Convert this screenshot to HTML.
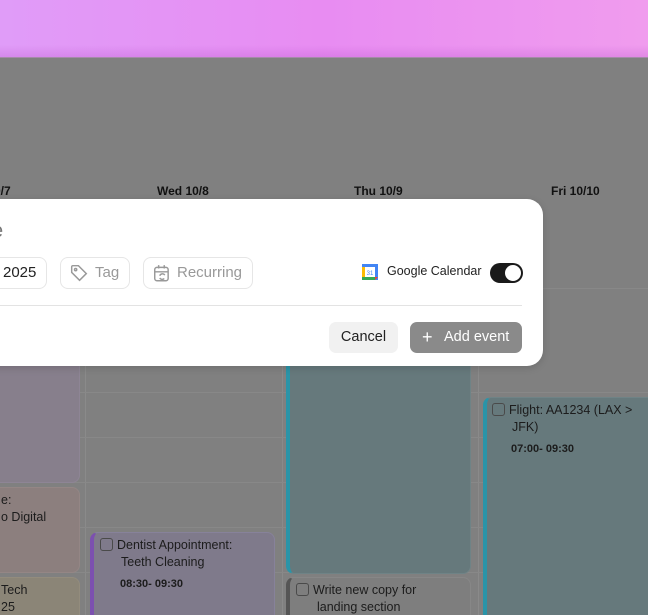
<!DOCTYPE html>
<html style="overflow:hidden;width:648px;height:615px"><head><style>
*{box-sizing:border-box;margin:0;padding:0}
body{width:648px;height:615px;overflow:hidden;position:relative;font-family:"Liberation Sans",sans-serif;background:#808080}
.top{position:absolute;left:0;top:0;width:648px;height:57px;background:linear-gradient(90deg,#e09cf8,#e88cf2 50%,#f09cee);}
.top:after{content:"";position:absolute;left:0;right:0;bottom:0;height:12px;background:linear-gradient(rgba(180,80,200,0),rgba(180,80,200,.25))}
.line{position:absolute;left:0;top:57px;width:648px;height:1px;background:#a58aa8}
.vl{position:absolute;top:290px;width:1px;height:325px;background:#8a8a8a}
.hl{position:absolute;height:1px;background:#888;left:0;width:648px}
.hd{position:absolute;top:184px;font-size:12px;font-weight:bold;color:#111}
.ev{position:absolute;border-radius:8px;font-size:12.5px;color:#1c1c1c}
.cb{display:inline-block;width:13px;height:13px;border:1.5px solid #4a4a4a;border-radius:3px;vertical-align:-2px;margin-right:4px}
.modal{position:absolute;left:-40px;top:199px;width:583px;height:167px;background:#fff;border-radius:16px;box-shadow:0 2px 8px rgba(0,0,0,.15)}
.chip{position:absolute;top:257px;height:32px;border:1px solid #e6e6e6;border-radius:8px;font-size:15px;color:#999;line-height:30px}
</style></head><body>
<div class="top"></div><div class="line"></div>
<div class="hd" style="left:-6px">0/7</div>
<div class="hd" style="left:157px">Wed 10/8</div>
<div class="hd" style="left:354px">Thu 10/9</div>
<div class="hd" style="left:551px">Fri 10/10</div>
<div class="vl" style="left:85px"></div><div class="vl" style="left:282px"></div><div class="vl" style="left:478px"></div>
<div class="hl" style="top:288px"></div>
<div class="hl" style="top:392px"></div><div class="hl" style="top:437px"></div><div class="hl" style="top:482px"></div><div class="hl" style="top:527px"></div><div class="hl" style="top:572px"></div>
<div class="ev" style="left:-10px;top:340px;width:90px;height:143px;background:#877f8c;border:1px solid #8e8595"></div>
<div class="ev" style="left:-10px;top:487px;width:90px;height:86px;background:#8c7f7e;border:1px solid #948685;padding:4px 0 0 10px;line-height:17px">e:<br>o Digital</div>
<div class="ev" style="left:-10px;top:577px;width:90px;height:50px;background:#8b8577;border:1px solid #938c7d;padding:4px 0 0 10px;line-height:17px">Tech<br>25</div>
<div class="ev" style="left:90px;top:532px;width:185px;height:90px;background:#7f7a8b;border:1px solid #87829a;border-left:4px solid #7c50b0;padding:4px 0 0 6px;line-height:17px"><span class="cb"></span>Dentist Appointment:<br><span style="margin-left:21px">Teeth Cleaning</span><div style="font-size:11px;font-weight:bold;margin-top:5px;margin-left:20px">08:30- 09:30</div></div>
<div class="ev" style="left:286px;top:340px;width:185px;height:234px;background:#66797c;border:1px solid #6f8386;border-left:4px solid #2a94a8"></div>
<div class="ev" style="left:286px;top:577px;width:185px;height:50px;background:#7e7e7e;border:1px solid #878787;border-left:4px solid #555;padding:4px 0 0 6px;line-height:17px"><span class="cb"></span>Write new copy for<br><span style="margin-left:21px">landing section</span></div>
<div class="ev" style="left:483px;top:397px;width:175px;height:230px;background:#66797c;border:1px solid #6f8386;border-left:4px solid #2a94a8;padding:4px 0 0 5px;line-height:17px"><span class="cb"></span>Flight: AA1234 (LAX &gt;<br><span style="margin-left:20px">JFK)</span><div style="font-size:11px;font-weight:bold;margin-top:5px;margin-left:19px">07:00- 09:30</div></div>
<div class="modal"></div>
<div style="position:absolute;left:-8px;top:220px;font-size:20px;color:#777">e</div>
<div class="chip" style="left:-20px;width:67px;color:#222;padding-left:22px">2025</div>
<div class="chip" style="left:60px;width:70px;padding-left:34px"><svg style="position:absolute;left:9px;top:6px" width="18" height="18" viewBox="0 0 16 16" fill="none" stroke="#999" stroke-width="1.3"><path d="M1.5 2.5v5l7 7 6-6-7-7h-5a1 1 0 0 0-1 1z"/><circle cx="5" cy="5" r="1"/></svg>Tag</div>
<div class="chip" style="left:143px;width:110px;padding-left:33px"><svg style="position:absolute;left:9px;top:6px" width="18" height="19" viewBox="0 0 16 17" fill="none" stroke="#999" stroke-width="1.3"><rect x="1.5" y="3" width="12" height="12" rx="2"/><path d="M5 1v3M10 1v3M1.5 7h12M6 10.5a2.5 2.5 0 0 1 4.5-.5M10 13a2.5 2.5 0 0 1-4-.5"/></svg>Recurring</div>
<svg style="position:absolute;left:362px;top:264px" width="16" height="16" viewBox="0 0 16 16"><rect x="0" y="0" width="16" height="16" fill="#4285f4"/><rect x="3" y="3" width="10" height="10" fill="#fff"/><rect x="0" y="13" width="13" height="3" fill="#34a853"/><rect x="0" y="3" width="3" height="10" fill="#fbbc04"/><path d="M13 13h3l-3 3z" fill="#ea4335"/><text x="8" y="11" font-size="6" text-anchor="middle" fill="#4285f4" font-family="Liberation Sans">31</text></svg>
<div style="position:absolute;left:387px;top:264px;font-size:12.5px;color:#222">Google Calendar</div>
<div style="position:absolute;left:490px;top:263px;width:33px;height:20px;border-radius:10px;background:#1a1a1a"><div style="position:absolute;right:2px;top:2px;width:16px;height:16px;border-radius:50%;background:#fff"></div></div>
<div style="position:absolute;left:0;top:305px;width:522px;height:1px;background:#e3e3e3"></div>
<div style="position:absolute;left:329px;top:322px;width:69px;height:31px;border-radius:7px;background:#f1f1f1;font-size:14.5px;color:#222;text-align:center;line-height:31px">Cancel</div>
<div style="position:absolute;left:410px;top:322px;width:112px;height:31px;border-radius:7px;background:#8a8a8a;font-size:14.5px;color:#fff;line-height:31px;padding-left:34px"><span style="position:absolute;left:12px;top:0;font-size:18px">+</span>Add event</div>
</body></html>
